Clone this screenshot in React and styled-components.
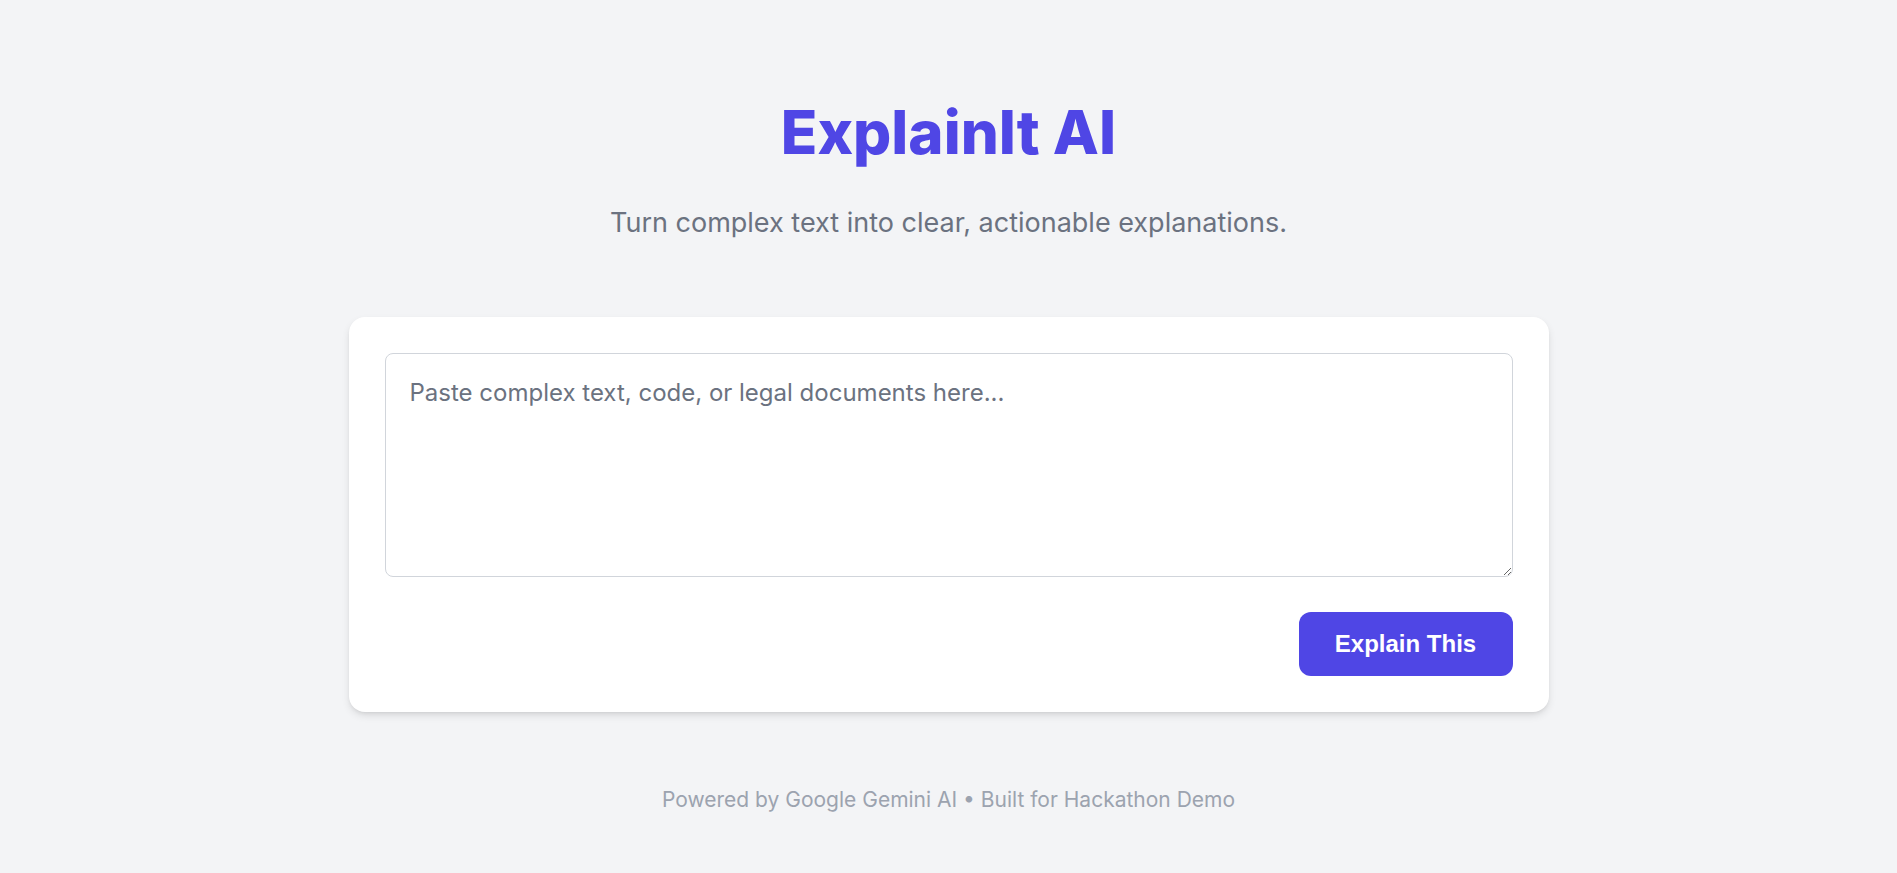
import React from "react";
import styled, { createGlobalStyle } from "styled-components";

const GlobalStyle = createGlobalStyle`
  * { box-sizing: border-box; }
  body {
    margin: 0;
    background: #f3f4f6;
    font-family: Inter, "Noto Sans", sans-serif;
  }
`;

const Page = styled.div`
  min-height: 100vh;
  display: flex;
  flex-direction: column;
  align-items: center;
  padding-top: 102px;
`;

const Title = styled.h1`
  margin: 0;
  font-size: 60px;
  line-height: 60px;
  font-weight: 800;
  color: #4f46e5;
`;

const Subtitle = styled.p`
  margin: 43px 0 0;
  font-size: 27px;
  line-height: 36px;
  color: #6b7280;
`;

const Card = styled.div`
  margin-top: 76px;
  width: 1200px;
  background: #fff;
  border-radius: 16px;
  padding: 36px;
  box-shadow: 0 4px 8px -1px rgba(0, 0, 0, 0.12), 0 2px 4px -2px rgba(0, 0, 0, 0.1);
  display: flex;
  flex-direction: column;
  gap: 35px;
`;

const TextArea = styled.textarea`
  display: block;
  width: 100%;
  height: 224px;
  padding: 24px;
  border: 1px solid #d1d5db;
  border-radius: 8px;
  font-family: Inter, "Noto Sans", sans-serif;
  font-size: 24px;
  line-height: normal;
  color: #111827;
  resize: vertical;
  outline: none;
  &::placeholder { color: #6b7280; }
`;

const Actions = styled.div`
  display: flex;
  justify-content: flex-end;
`;

const Button = styled.button`
  width: 214px;
  height: 64px;
  border: none;
  border-radius: 12px;
  background: #4f46e5;
  color: #fff;
  font-family: "Liberation Sans", Arial, sans-serif;
  font-weight: 700;
  font-size: 24px;
  cursor: pointer;
`;

const Footer = styled.footer`
  margin-top: 75px;
  font-size: 21px;
  line-height: 25px;
  color: #9ca3af;
`;

export default function App() {
  return (
    <>
      <GlobalStyle />
      <Page>
        <Title>ExplainIt AI</Title>
        <Subtitle>Turn complex text into clear, actionable explanations.</Subtitle>
        <Card>
          <TextArea placeholder="Paste complex text, code, or legal documents here..." />
          <Actions>
            <Button>Explain This</Button>
          </Actions>
        </Card>
        <Footer>Powered by Google Gemini AI • Built for Hackathon Demo</Footer>
      </Page>
    </>
  );
}
